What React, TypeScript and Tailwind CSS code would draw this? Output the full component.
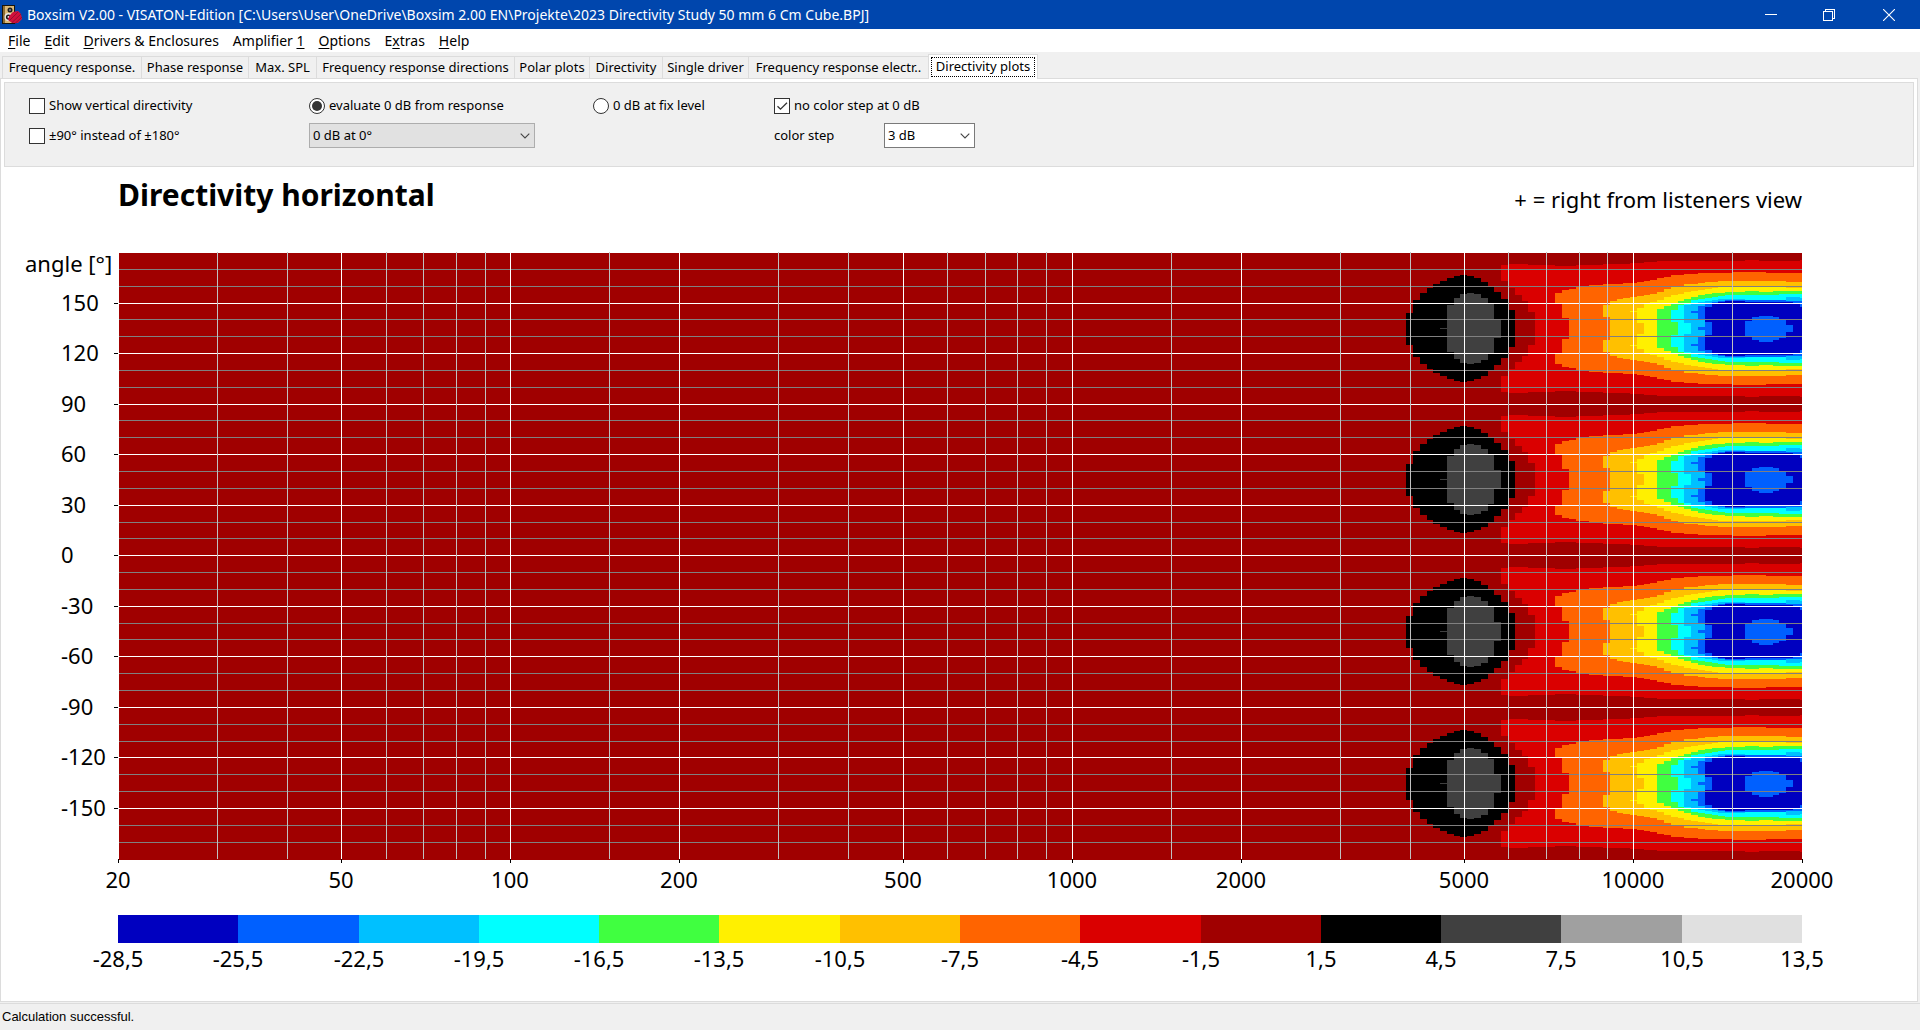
import { useState } from "react";

const MENU = [
  { before: "", key: "F", after: "ile" },
  { before: "", key: "E", after: "dit" },
  { before: "", key: "D", after: "rivers & Enclosures" },
  { before: "Amplifier ", key: "1", after: "" },
  { before: "", key: "O", after: "ptions" },
  { before: "E", key: "x", after: "tras" },
  { before: "", key: "H", after: "elp" },
];

const TABS = [
  { name: "Frequency response.", width: "w-[139px]" },
  { name: "Phase response", width: "w-[107px]" },
  { name: "Max. SPL", width: "w-[68px]" },
  { name: "Frequency response directions", width: "w-[198px]" },
  { name: "Polar plots", width: "w-[75px]" },
  { name: "Directivity", width: "w-[73px]" },
  { name: "Single driver", width: "w-[86px]" },
  { name: "Frequency response electr..", width: "w-[180px]" },
  { name: "Directivity plots", width: "w-[110px]" },
];

const SCALE = [
  "#0000c0", "#0060ff", "#00c0ff", "#00ffff", "#40ff40", "#fff000", "#ffc000",
  "#ff6400", "#da0000", "#a00000", "#000000", "#404040", "#a0a0a0", "#e0e0e0",
];
const LEVELS = [
  "-28,5", "-25,5", "-22,5", "-19,5", "-16,5", "-13,5", "-10,5", "-7,5",
  "-4,5", "-1,5", "1,5", "4,5", "7,5", "10,5", "13,5",
];

// plot area
const LEFT = 118;
const RIGHT = 1802;
const TOP = 253;
const BOTTOM = 860;

const freqX = (f: number) =>
  Math.round(LEFT + ((RIGHT - LEFT) * Math.log10(f / 20)) / 3);
const angleY = (a: number) => Math.floor(252.5 + ((180 - a) * 606.5) / 360);

// first and last frequency column of the lobes, one column is 1/25 octave
const colX = (k: number) => (k >= 59 ? RIGHT : Math.round(1406.2 + k * 6.785));

// outer = half height in thirds of a pixel, repeated `n` columns; inner = hole
type Run = [n: number, outer: number, inner?: number];
type Band = { color: string; start: number; runs: Run[] };

const BANDS: Band[] = [
  {
    color: "#000000",
    start: 0,
    runs: [[1, 48], [1, 85], [1, 106], [1, 121], [1, 133], [1, 142], [1, 151], [1, 157], [1, 160], [1, 157], [1, 151], [1, 141], [1, 127], [1, 109], [1, 88], [1, 55]],
  },
  {
    color: "#404040",
    start: 5,
    runs: [[1, 2], [1, 70], [1, 91], [1, 103], [1, 106], [1, 103], [1, 93], [1, 73], [1, 28]],
  },
  {
    color: "#da0000",
    start: 14,
    runs: [[1, 190, 142], [1, 193, 121], [1, 193, 100], [1, 193, 82], [1, 190, 49], [3, 190], [3, 187], [4, 190], [4, 193], [2, 196], [2, 199], [13, 202], [2, 205], [6, 202], [1, 205]],
  },
  {
    color: "#ff6400",
    start: 22,
    runs: [[1, 106, 76], [1, 115, 31], [1, 118], [2, 124], [2, 130], [3, 133], [2, 136], [1, 139], [1, 142], [1, 145], [1, 151], [1, 154], [2, 160], [2, 163], [5, 166], [5, 169], [6, 166]],
  },
  {
    color: "#ffc000",
    start: 29,
    runs: [[1, 70, 34], [1, 82], [1, 88], [1, 91], [1, 94], [1, 97], [1, 100], [1, 103], [1, 109], [1, 118], [1, 124], [1, 127], [2, 133], [1, 136], [2, 139], [10, 142], [3, 139]],
  },
  {
    color: "#fff000",
    start: 33,
    runs: [[1, 52, 49], [1, 61, 16], [1, 73], [1, 79], [1, 85], [1, 94], [1, 100], [1, 103], [1, 109], [1, 112], [1, 115], [1, 118], [1, 121], [10, 124], [3, 121]],
  },
  {
    color: "#40ff40",
    start: 37,
    runs: [[1, 58], [1, 67], [1, 76], [1, 82], [1, 88], [1, 94], [1, 100], [1, 103], [2, 106], [3, 109], [2, 112], [2, 109], [5, 112]],
  },
  {
    color: "#00ffff",
    start: 39,
    runs: [[1, 55, 19], [1, 70], [1, 76], [1, 85], [1, 88], [1, 91], [1, 94], [1, 97], [8, 100], [4, 103]],
  },
  {
    color: "#00c0ff",
    start: 41,
    runs: [[1, 70, 17], [1, 76], [1, 79], [1, 82], [1, 85], [4, 88], [6, 85], [2, 94], [2, 91]],
  },
  {
    color: "#0060ff",
    start: 42,
    runs: [[1, 52, 46], [1, 67, 26], [1, 76], [1, 79], [1, 82], [9, 85], [4, 82]],
  },
  { color: "#0060ff", start: 43, runs: [[1, 4]] },
  {
    color: "#0000c0",
    start: 44,
    runs: [[1, 64, 19], [1, 76], [1, 79], [3, 82], [7, 80], [1, 76], [1, 64]],
  },
  {
    color: "#0060ff",
    start: 50,
    runs: [[1, 22], [1, 34], [1, 39], [1, 39], [1, 34], [1, 27], [1, 11]],
  },
];

const bandPath = ({ start, runs }: Band) => {
  let k = start;
  let d = "";
  for (const [n, outer, inner] of runs) {
    const x1 = colX(k);
    const x2 = colX(k + n);
    const o = outer / 3;
    const i = (inner ?? 0) / 3;
    if (inner) {
      d += `M${x1} ${-o}H${x2}V${-i}H${x1}ZM${x1} ${i}H${x2}V${o}H${x1}Z`;
    } else {
      d += `M${x1} ${-o}H${x2}V${o}H${x1}Z`;
    }
    k += n;
  }
  return d;
};

const MAJOR_F = [50, 100, 200, 500, 1000, 2000, 5000, 10000];
const MINOR_F = [
  30, 40, 60, 70, 80, 90, 150, 300, 400, 600, 700, 800, 900, 1500, 3000, 4000,
  6000, 7000, 8000, 9000, 15000,
];
const MAJOR_A = [150, 120, 90, 60, 30, 0, -30, -60, -90, -120, -150];
const ALL_A = Array.from({ length: 35 }, (_, i) => 170 - i * 10);

function DirectivityChart() {
  return (
    <svg
      viewBox="1 242 1916 750"
      className="block w-full text-[22px]"
      role="img"
      aria-label="Directivity horizontal"
    >
      <g shapeRendering="crispEdges">
        <rect x={LEFT + 1} y={TOP} width={RIGHT - LEFT - 1} height={BOTTOM - TOP} fill="#a00000" />
        {[135, 45, -45, -135].map((a) => (
          <g key={a} transform={`translate(0 ${angleY(a) + 0.5})`}>
            {BANDS.map((band, i) => (
              <path key={i} d={bandPath(band)} fill={band.color} />
            ))}
          </g>
        ))}
        {ALL_A.map((a) => (
          <rect
            key={a}
            x={LEFT + 1}
            y={angleY(a)}
            width={RIGHT - LEFT - 1}
            height="1"
            fill={a % 30 === 0 ? "#ffffff" : "#808080"}
          />
        ))}
        {MINOR_F.map((f) => (
          <rect key={f} x={freqX(f)} y={TOP - 1} width="1" height={BOTTOM - TOP} fill="#c0c0c0" />
        ))}
        {MAJOR_F.map((f) => (
          <rect key={f} x={freqX(f)} y={TOP} width="1" height={BOTTOM - TOP - 1} fill="#ffffff" />
        ))}
        {MAJOR_A.map((a) => (
          <rect key={a} x="114" y={angleY(a)} width="4" height="1" fill="#000000" />
        ))}
        {[20, ...MAJOR_F, 20000].map((f) => (
          <rect key={f} x={freqX(f)} y={BOTTOM - 1} width="1" height="4" fill="#000000" />
        ))}
        {SCALE.map((color, i) => (
          <rect
            key={color}
            x={Math.round(LEFT + (i * (RIGHT - LEFT)) / 14)}
            y="915"
            width={i === SCALE.length - 1 ? 120 : 121}
            height="28"
            fill={color}
          />
        ))}
      </g>
      <text x="25" y="272">angle [°]</text>
      {MAJOR_A.map((a) => (
        <text key={a} x="61" y={angleY(a) + 8}>{a}</text>
      ))}
      <g textAnchor="middle">
        {[20, ...MAJOR_F, 20000].map((f) => (
          <text key={f} x={freqX(f)} y="888">{f}</text>
        ))}
        {LEVELS.map((level, i) => (
          <text key={level} x={Math.round(LEFT + (i * (RIGHT - LEFT)) / 14)} y="967">{level}</text>
        ))}
      </g>
    </svg>
  );
}

function CheckBox({ label, defaultChecked = false }: { label: string; defaultChecked?: boolean }) {
  return (
    <label className="flex items-center gap-1 whitespace-nowrap">
      <span className="relative flex size-4">
        <input
          type="checkbox"
          defaultChecked={defaultChecked}
          className="peer size-4 appearance-none border border-[#333333] bg-white"
        />
        <svg viewBox="0 0 16 16" className="pointer-events-none absolute inset-0 hidden size-4 peer-checked:block">
          <path d="M3.5 8.2 6.5 11.2 13 4.7" fill="none" stroke="#333" strokeWidth="1.3" />
        </svg>
      </span>
      {label}
    </label>
  );
}

function Radio({ label, checked, onChange }: { label: string; checked: boolean; onChange: () => void }) {
  return (
    <label className="flex items-center gap-1 whitespace-nowrap">
      <span className="relative flex size-4">
        <input
          type="radio"
          name="reference"
          checked={checked}
          onChange={onChange}
          className="peer size-4 appearance-none rounded-full border border-[#333333] bg-white"
        />
        <span className="pointer-events-none absolute inset-[3px] hidden rounded-full bg-[#333333] peer-checked:block" />
      </span>
      {label}
    </label>
  );
}

function Chevron() {
  return (
    <svg viewBox="0 0 10 6" className="pointer-events-none absolute top-[10px] right-[5px] h-[6px] w-[10px]">
      <path d="M0.7 0.7 5 5 9.3 0.7" fill="none" stroke="#444" strokeWidth="1.1" />
    </svg>
  );
}

function AppIcon() {
  return (
    <svg viewBox="0 0 20 20" className="size-5" aria-hidden="true">
      <rect x="0" y="0" width="13" height="19" fill="#1b1408" />
      <rect x="2" y="1" width="10" height="17" fill="#d8b878" />
      <rect x="1" y="1" width="2" height="17" fill="#8c6c34" />
      <circle cx="8" cy="5" r="2.5" fill="#1c1c1c" />
      <circle cx="8" cy="5" r="1" fill="#888" />
      <circle cx="6.5" cy="12" r="4" fill="#e8e8e8" />
      <circle cx="6.5" cy="12" r="2.6" fill="#1c1c1c" />
      <circle cx="6.5" cy="12" r="1" fill="#fff" />
      <path d="M11 7 16 6 19 9 20 14 16 18 10 18 6 15 7 11Z" fill="#d0103c" />
      <path d="M7.5 15.5 16 7M10 17.5 19 9M13 18.5 20 12" stroke="#8c1030" strokeWidth="0.9" />
    </svg>
  );
}

export default function App() {
  const [fromResponse, setFromResponse] = useState(true);

  return (
    <div className="flex min-h-screen flex-col bg-[#f0f0f0] font-['Noto_Sans',sans-serif] text-[13px] text-black">
      <header className="flex h-[29px] items-center bg-[#0046ad] pl-0.5 text-[14px] text-white">
        <AppIcon />
        <span className="ml-[5px] flex-1 whitespace-nowrap">
          Boxsim V2.00 - VISATON-Edition [C:\Users\User\OneDrive\Boxsim 2.00 EN\Projekte\2023 Directivity Study 50 mm 6 Cm Cube.BPJ]
        </span>
        <button aria-label="Minimize" className="flex h-full w-[58px] items-center justify-center">
          <svg viewBox="0 0 12 12" className="size-3" shapeRendering="crispEdges">
            <rect x="0" y="5" width="12" height="1" fill="#fff" />
          </svg>
        </button>
        <button aria-label="Restore" className="flex h-full w-[58px] items-center justify-center">
          <svg viewBox="0 0 12 12" className="size-3" fill="none" stroke="#fff" shapeRendering="crispEdges">
            <path d="M0.5 2.5H9.5V11.5H0.5ZM2.5 2.5V0.5H11.5V9.5H9.5" />
          </svg>
        </button>
        <button aria-label="Close" className="flex h-full w-[62px] items-center justify-center">
          <svg viewBox="0 0 12 12" className="size-3" stroke="#fff" strokeWidth="1.1">
            <path d="M0 0 12 12M12 0 0 12" />
          </svg>
        </button>
      </header>

      <nav className="flex h-[23px] items-center bg-white pl-px text-[14px]">
        {MENU.map((item) => (
          <button key={item.key} className="px-[7px] whitespace-pre">
            {item.before}
            <span className="underline underline-offset-2">{item.key}</span>
            {item.after}
          </button>
        ))}
      </nav>

      <div role="tablist" className="flex h-[26px] items-end pl-[2px]">
        {TABS.map((tab, i) =>
          i === TABS.length - 1 ? (
            <button
              key={tab.name}
              role="tab"
              aria-selected="true"
              className={`${tab.width} z-10 -mb-px h-[25px] border border-b-0 border-[#dcdcdc] bg-white p-[2px] whitespace-nowrap`}
            >
              <span className="flex h-5 items-center justify-center border border-dotted border-black">{tab.name}</span>
            </button>
          ) : (
            <button
              key={tab.name}
              role="tab"
              aria-selected="false"
              className={`${tab.width} h-[22px] border-t border-l border-[#dcdcdc] whitespace-nowrap`}
            >
              {tab.name}
            </button>
          )
        )}
      </div>

      <main className="mr-0.5 flex-1 border border-[#dcdcdc] bg-white">
        <section className="mx-[3px] mt-[3px] grid h-[85px] grid-cols-[280px_284px_181px_1fr] grid-rows-[25px_25px] gap-y-[5px] border border-[#dcdcdc] bg-[#f0f0f0] pt-[10px] pl-6">
          <CheckBox label="Show vertical directivity" />
          <Radio label="evaluate 0 dB from response" checked={fromResponse} onChange={() => setFromResponse(true)} />
          <Radio label="0 dB at fix level" checked={!fromResponse} onChange={() => setFromResponse(false)} />
          <CheckBox label="no color step at 0 dB" defaultChecked />
          <CheckBox label="±90° instead of ±180°" />
          <div className="relative w-[226px]">
            <select aria-label="0 dB reference" className="block h-[25px] w-full appearance-none border border-[#adadad] bg-[#e1e1e1] px-[3px]">
              <option>0 dB at 0°</option>
            </select>
            <Chevron />
          </div>
          <div className="col-start-4 flex items-center">
            <label htmlFor="step" className="w-[110px]">color step</label>
            <div className="relative w-[91px]">
              <select id="step" className="block h-[25px] w-full appearance-none border border-[#7a7a7a] bg-white px-[3px]">
                <option>3 dB</option>
              </select>
              <Chevron />
            </div>
          </div>
        </section>

        <div className="flex h-[75px] items-start justify-between pt-3 pr-[6%] pl-[117px]">
          <h1 className="text-[30px] leading-8 font-bold">Directivity horizontal</h1>
          <p className="pt-1 text-[22px] leading-8">+ = right from listeners view</p>
        </div>
        <DirectivityChart />
      </main>

      <footer className="mt-px flex h-[27px] items-center border-t border-[#dcdcdc] pl-0.5 font-['Liberation_Sans',sans-serif] text-[13px]">
        Calculation successful.
      </footer>
    </div>
  );
}
